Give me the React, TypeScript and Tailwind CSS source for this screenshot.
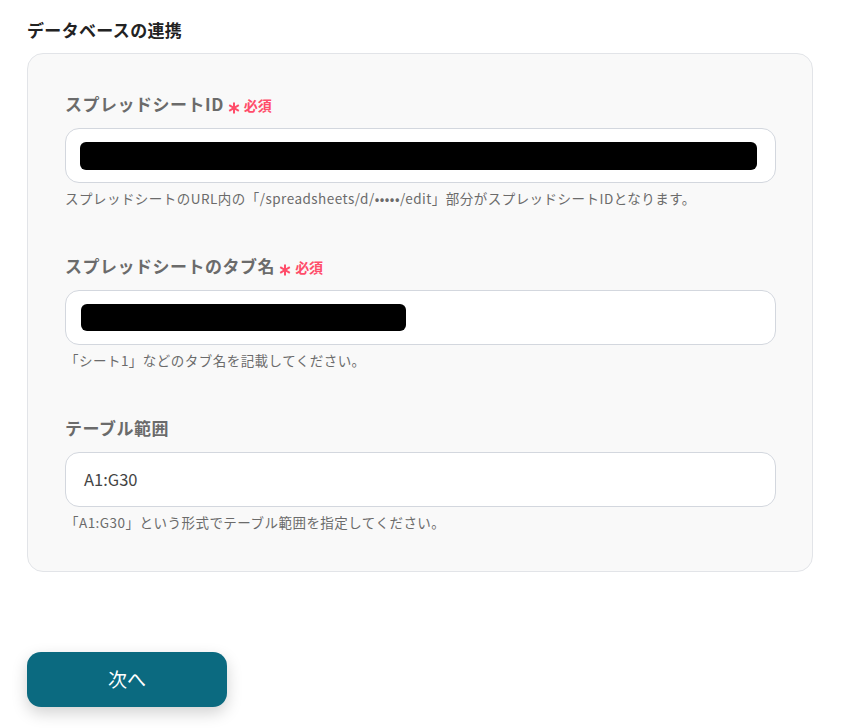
import React from "react";

const font = { fontFamily: '"Noto Sans CJK JP", "Noto Sans", sans-serif' };

type FieldProps = {
  label: string;
  required?: boolean;
  help: string;
  children: React.ReactNode;
};

function Asterisk() {
  return (
    <svg width="12" height="12" viewBox="0 0 12 12" className="translate-y-[4px]">
      <g stroke="currentColor" strokeWidth="2" strokeLinecap="butt">
        <line x1="6" y1="0.5" x2="6" y2="11.5" />
        <line x1="1.2" y1="3.2" x2="10.8" y2="8.8" />
        <line x1="1.2" y1="8.8" x2="10.8" y2="3.2" />
      </g>
    </svg>
  );
}

function Field({ label, required, help, children }: FieldProps) {
  return (
    <div className="flex flex-col">
      <div className="flex items-center h-6">
        <span className="text-[17px] leading-6 font-bold tracking-[0.03em] text-[#6b6b6b]">{label}</span>
        {required && (
          <span className="flex items-center ml-[4px] text-[#ff4d6a]">
            <Asterisk />
            <span className="text-[14px] leading-6 font-bold ml-[4px] translate-y-[1px]">必須</span>
          </span>
        )}
      </div>
      <div className="mt-3 h-[55px] bg-white border border-[#d3d7de] rounded-[14px] flex items-center px-[14px]">
        {children}
      </div>
      <p className="mt-[6px] text-[13.5px] leading-[18px] tracking-[0.035em] text-[#6b6b6b]">{help}</p>
    </div>
  );
}

export default function App() {
  return (
    <div className="min-h-[728px] bg-white pt-[20px] px-[27px]" style={font}>
      <h2 className="text-[17px] leading-5 font-bold tracking-[0.02em] text-[#222]">データベースの連携</h2>
      <div className="mt-[13px] w-[786px] bg-[#f9f9f9] border border-[#e2e4e8] rounded-[16px] pt-[38px] pb-[40px] pl-[37px] pr-[36px] flex flex-col gap-[47px]">
        <Field
          label="スプレッドシートID"
          required
          help="スプレッドシートのURL内の「/spreadsheets/d/•••••/edit」部分がスプレッドシートIDとなります。"
        >
          <div className="h-[28px] w-[677px] bg-black rounded-[6px]" />
        </Field>
        <Field
          label="スプレッドシートのタブ名"
          required
          help="「シート1」などのタブ名を記載してください。"
        >
          <div className="ml-[1px] h-[27px] w-[325px] bg-black rounded-[6px]" />
        </Field>
        <Field
          label="テーブル範囲"
          help="「A1:G30」という形式でテーブル範囲を指定してください。"
        >
          <span className="ml-[4px] text-[16.5px] text-[#444]">A1:G30</span>
        </Field>
      </div>
      <button className="mt-[80px] w-[200px] h-[55px] rounded-[14px] bg-[#0b6a80] text-white text-[19px] shadow-[0_6px_16px_rgba(0,0,0,0.18)]">
        次へ
      </button>
    </div>
  );
}
